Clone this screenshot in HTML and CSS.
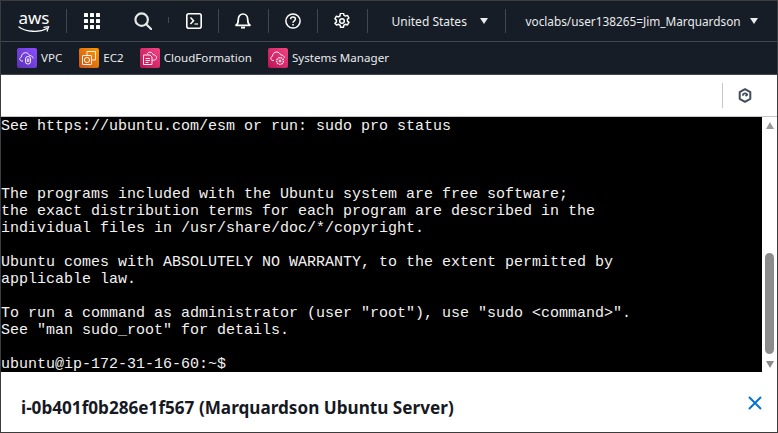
FILE: index.html
```html
<!DOCTYPE html>
<html lang="en">
<head>
<meta charset="utf-8">
<title>EC2 Instance Connect</title>
<link rel="stylesheet" href="styles.css">
</head>
<body>
<div class="window">
  <header class="topbar">
    <div class="cell cell-logo">
      <svg class="logo" width="32" height="40" viewBox="0 0 32 40">
        <text x="16" y="23" class="logo-text" text-anchor="middle">aws</text>
        <path d="M1 26C8 31 21 32 29 27.500" fill="none" stroke="#fff" stroke-width="1.400" stroke-linecap="round"/>
        <path d="M25.500 26.300L30.600 25.700L29 30.500" fill="none" stroke="#fff" stroke-width="1.200"/>
      </svg>
    </div>
    <div class="cell cell-grid">
      <svg width="16" height="16" viewBox="0 0 16 16" fill="#fff">
        <rect x="0" y="0" width="4" height="4" rx=".6"/><rect x="6" y="0" width="4" height="4" rx=".6"/><rect x="12" y="0" width="4" height="4" rx=".6"/>
        <rect x="0" y="6" width="4" height="4" rx=".6"/><rect x="6" y="6" width="4" height="4" rx=".6"/><rect x="12" y="6" width="4" height="4" rx=".6"/>
        <rect x="0" y="12" width="4" height="4" rx=".6"/><rect x="6" y="12" width="4" height="4" rx=".6"/><rect x="12" y="12" width="4" height="4" rx=".6"/>
      </svg>
    </div>
    <div class="cell cell-search">
      <svg width="18" height="18" viewBox="0 0 20 20" fill="none" stroke="#e6e8ea" stroke-width="2.400"><circle cx="8.500" cy="8.500" r="6.900"/><path d="M13.500 13.500L19 19" stroke-linecap="round"/></svg>
      <span class="tick"></span>
    </div>
    <div class="cell cell-term">
      <svg width="16" height="16" viewBox="0 0 16 16" fill="none" stroke="#fff" stroke-width="1.600"><rect x=".8" y=".8" width="14.400" height="14.400" rx="2"/><path d="M4.500 4.500L7.500 7.800L4.500 11"/><path d="M8.500 11H12" stroke-width="1.200"/></svg>
    </div>
    <div class="cell cell-icon">
      <svg width="16" height="16" viewBox="0 0 16 16" fill="none" stroke="#fff" stroke-width="1.700"><path d="M1 12.300C2.800 11 3.300 9.500 3.300 6.400C3.300 3.400 5.200 1 8 1s4.700 2.400 4.700 5.400c0 3.100.5 4.600 2.300 5.900z" stroke-linejoin="round"/><path d="M6 14.600h4" stroke-width="1.900"/></svg>
    </div>
    <div class="cell cell-icon">
      <svg width="16" height="16" viewBox="0 0 16 16" fill="none" stroke="#fff" stroke-width="1.500"><circle cx="8" cy="8" r="7.100"/><path d="M5.600 6.200C5.600 4.800 6.700 4 8 4s2.400.8 2.400 2.100C10.400 7.800 8 7.800 8 9.700"/><path d="M8 11v1.500" stroke-width="1.600"/></svg>
    </div>
    <div class="cell cell-icon">
      <svg width="16" height="16" viewBox="0 0 16 16" fill="none" stroke="#fff" stroke-width="1.500" stroke-linejoin="round"><path d="M6.500 .8h3l.4 2 1.500.9 2-.7 1.500 2.600-1.500 1.300v1.800l1.500 1.300-1.500 2.600-2-.7-1.500.9-.4 2h-3l-.4-2-1.500-.9-2 .7L.9 10.800l1.500-1.300V7.700L.9 6.400 2.400 3.800l2 .7 1.500-.9z" transform="translate(0 -.6)"/><circle cx="8" cy="8" r="2.300"/></svg>
    </div>
    <div class="cell cell-region">
      <span class="nav-label">United States</span>
      <span class="caret"></span>
    </div>
    <div class="cell-user">
      <span class="nav-label nav-label-user">voclabs/user138265=Jim_Marquardson</span>
      <span class="caret"></span>
    </div>
  </header>

  <nav class="favbar">
    <a class="fav fav-first">
      <span class="badge badge-purple">
        <svg width="16" height="16" viewBox="0 0 16 16" fill="none" stroke="#fff" stroke-width=".9"><path d="M4 11H2.800C1.600 11 .8 10 .8 8.900c0-1 .7-1.800 1.700-2 0-2.600 1.700-4.200 4-4.200 1.900 0 3.300 1.100 3.800 2.700 1.900 0 3.500 1 3.900 2.900"/><rect x="6.500" y="6.500" width="5" height="7.500" rx="2.300"/><path d="M8.300 8.500v3.500M9.800 8.500v3.500"/></svg>
      </span>
      <span>VPC</span>
    </a>
    <a class="fav">
      <span class="badge badge-orange">
        <svg width="16" height="16" viewBox="0 0 16 16" fill="none" stroke="#fff" stroke-width=".9"><path d="M6 5V1.500h8.500V10H11"/><rect x="1.500" y="5.500" width="9" height="9" rx=".5"/><circle cx="6" cy="10" r="2.600"/></svg>
      </span>
      <span>EC2</span>
    </a>
    <a class="fav">
      <span class="badge badge-pink">
        <svg width="16" height="16" viewBox="0 0 16 16" fill="none" stroke="#fff" stroke-width=".9"><path d="M5 4.500C5.600 3 6.700 2.200 8 2.200c1.500 0 2.700 1 3 2.500 1.900-.1 3.500 1.100 3.500 2.900 0 1.500-1.100 2.600-2.700 2.600H10"/><path d="M1.500 5h6.500l2 2v7.500H1.500z"/><path d="M3.500 8.500h4.500M3.500 10.500h4.500M3.500 12.500h3"/></svg>
      </span>
      <span>CloudFormation</span>
    </a>
    <a class="fav">
      <span class="badge badge-pink">
        <svg width="16" height="16" viewBox="0 0 16 16" fill="none" stroke="#fff" stroke-width=".9"><path d="M4 10.500H3C1.700 10.500.8 9.500.8 8.300c0-1 .7-1.900 1.700-2.100C2.600 3.700 4.300 2 6.600 2c1.900 0 3.400 1.200 3.900 2.800 1.900 0 3.600 1.100 4 3"/><circle cx="10" cy="11" r="3.400" stroke-width="1.300" stroke-dasharray="1.500 .8"/><circle cx="10" cy="11" r="1"/></svg>
      </span>
      <span>Systems Manager</span>
    </a>
  </nav>

  <div class="toolbar">
    <span class="toolbar-rule"></span>
    <svg class="hex" width="14" height="15" viewBox="0 0 14 15" fill="none" stroke="#414d5c" stroke-width="2"><path d="M7 1.200l5.300 3v6.600L7 13.800l-5.300-3V4.200z" stroke-linejoin="round"/><path d="M4.800 7.700a2.300 2.300 0 0 1 4.400-1L7.500 8" stroke-width="1.800"/></svg>
  </div>

  <div class="terminal-row">
<pre class="terminal">See https://ubuntu.com/esm or run: sudo pro status



The programs included with the Ubuntu system are free software;
the exact distribution terms for each program are described in the
individual files in /usr/share/doc/*/copyright.

Ubuntu comes with ABSOLUTELY NO WARRANTY, to the extent permitted by
applicable law.

To run a command as administrator (user "root"), use "sudo &lt;command&gt;".
See "man sudo_root" for details.

ubuntu@ip-172-31-16-60:~$</pre>
    <div class="scrollbar">
      <span class="arrow-up"></span>
      <span class="scroll-track"><span class="scroll-thumb"></span></span>
      <span class="arrow-down"></span>
    </div>
  </div>

  <section class="details">
    <h2 class="instance-title">i-0b401f0b286e1f567 (Marquardson Ubuntu Server)</h2>
    <svg class="close" width="14" height="14" viewBox="0 0 14 14" fill="none" stroke="#0972d3" stroke-width="2"><path d="M1 1l12 12M13 1L1 13"/></svg>
  </section>
</div>
</body>
</html>
```
FILE: styles.css
```css
* { box-sizing: border-box; }
html, body { margin: 0; padding: 0; background: #fff; }
body { width: 778px; height: 433px; overflow: hidden; font-family: "Noto Sans", "Open Sans", sans-serif; }
.window {
  width: 778px; height: 433px; display: flex; flex-direction: column; overflow: hidden;
  border: 1px solid #3c3c3c;
}
.topbar {
  height: 41px; flex: none; display: flex; align-items: center; background: #161d26;
  border-bottom: 1px solid #414750; color: #e9ebed;
}
.cell { height: 24px; display: flex; align-items: center; justify-content: center; border-right: 1px solid #414750; flex: none; position: relative; }
.cell-logo { width: 66px; }
.cell-grid { width: 49px; border-right: 0; }
.cell-search { width: 53px; border-right: 0; }
.cell-term { width: 50px; }
.cell-icon { width: 49.500px; }
.tick { position: absolute; right: 0; top: 8px; width: 1px; height: 6px; background: #414750; }
.cell-region { width: 138px; justify-content: flex-start; padding-left: 24px; gap: 13px; }
.cell-user { display: flex; align-items: center; padding-left: 20px; gap: 9px; }
.logo-text { font-family: "Noto Sans", sans-serif; font-size: 17px; fill: #fff; }
.nav-label { font-size: 12px; white-space: nowrap; }
.nav-label-user { font-size: 11.800px; }
.caret { width: 0; height: 0; border-left: 4px solid transparent; border-right: 4px solid transparent; border-top: 6px solid #e9ebed; }
.favbar { height: 33px; flex: none; display: flex; align-items: center; padding-left: 16px; gap: 16px; background: #161d26; border-bottom: 1px solid #414750; }
.fav { display: flex; align-items: center; gap: 4px; color: #e9ebed; font-size: 11.600px; white-space: nowrap; line-height: 20px; }
.fav span:last-child { margin-top: -1px; }
.fav-first { margin-right: 1px; }
.badge { width: 20px; height: 20px; display: flex; align-items: center; justify-content: center; border-radius: 2px; }
.badge-purple { background: linear-gradient(45deg, #5a30b5, #8c4fff); }
.badge-orange { background: linear-gradient(45deg, #c8511b, #f90); }
.badge-pink { background: linear-gradient(45deg, #bc1356, #f34482); }
.toolbar { height: 42px; flex: none; display: flex; align-items: center; justify-content: flex-end; padding-right: 25px; gap: 15px; background: #fff; border-bottom: 1px solid #c6c6cd; }
.toolbar-rule { width: 1px; height: 25px; background: #c6c6cd; }
.terminal-row { height: 255px; flex: none; display: flex; }
.terminal { flex: 1; margin: 0; height: 255px; padding-top: 1px; background: #000; color: #f2f2f2; font-family: "Liberation Mono", monospace; font-size: 15px; line-height: 17px; overflow: hidden; }
.scrollbar { width: 15px; flex: none; display: flex; flex-direction: column; align-items: center; background: #fff; padding: 5px 0 4px; }
.arrow-up, .arrow-down { width: 0; height: 0; border-left: 4.500px solid transparent; border-right: 4.500px solid transparent; flex: none; }
.arrow-up { border-bottom: 7px solid #9a9a9a; }
.arrow-down { border-top: 7px solid #8a8a8a; }
.scroll-track { flex: 1; display: flex; flex-direction: column; justify-content: flex-end; width: 9px; padding-bottom: 7px; }
.scroll-thumb { height: 101px; border-radius: 5px; background: #8c8c8c; }
.details { flex: 1; display: flex; align-items: flex-start; justify-content: space-between; padding: 24px 15px 0 20px; background: #fff; }
.instance-title { margin: 1px 0 0; font-size: 17.150px; line-height: 22px; font-weight: 700; color: #16191f; white-space: nowrap; }
.close { margin-top: 0; }
```
